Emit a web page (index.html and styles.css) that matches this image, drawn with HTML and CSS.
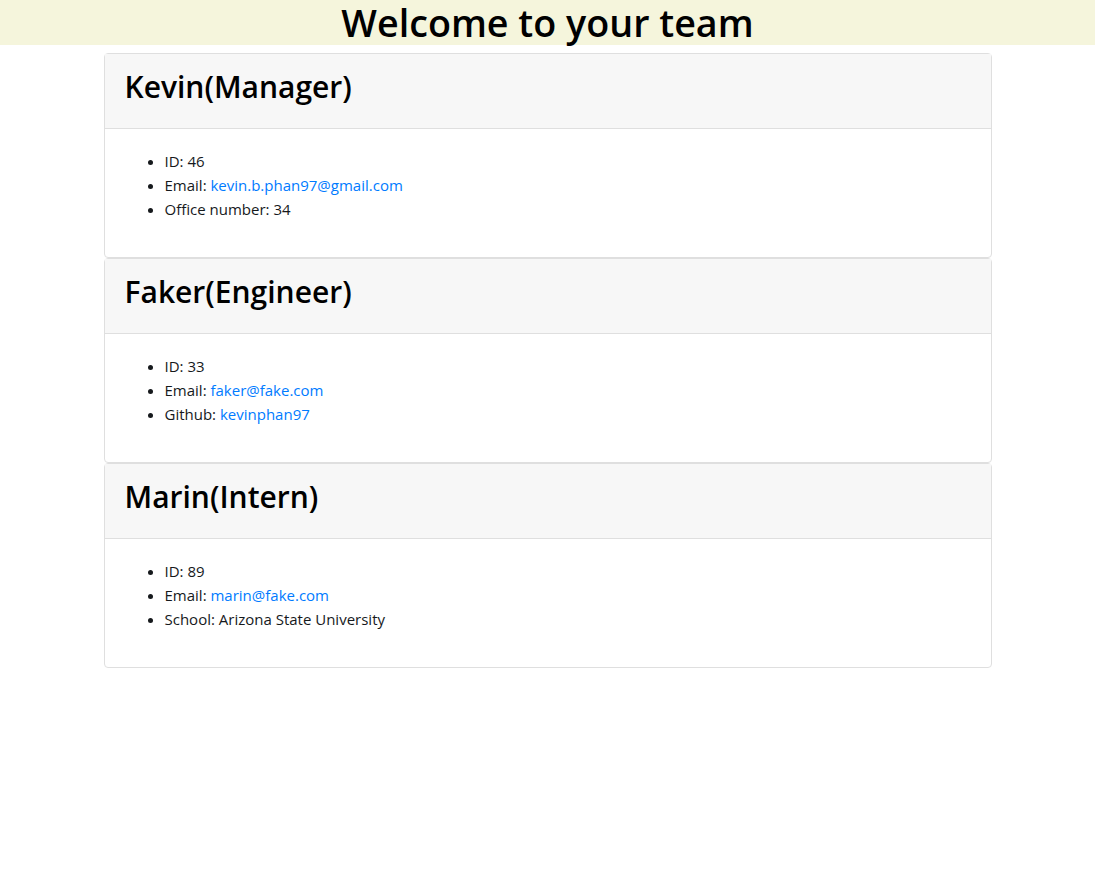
FILE: index.html
```html
<!DOCTYPE html>
<html lang="en">
<head>
<meta charset="utf-8">
<title>Team</title>
<link rel="stylesheet" href="styles.css">
</head>
<body>
<header class="banner">
  <h1 class="banner-title">Welcome to your team</h1>
</header>
<main class="team">
  <section class="card">
    <div class="card-header"><h2 class="card-title">Kevin(Manager)</h2></div>
    <div class="card-body">
      <ul class="info">
        <li>ID: 46</li>
        <li>Email: <a href="#">kevin.b.phan97@gmail.com</a></li>
        <li>Office number: 34</li>
      </ul>
    </div>
  </section>
  <section class="card">
    <div class="card-header"><h2 class="card-title">Faker(Engineer)</h2></div>
    <div class="card-body">
      <ul class="info">
        <li>ID: 33</li>
        <li>Email: <a href="#">faker@fake.com</a></li>
        <li>Github: <a href="#">kevinphan97</a></li>
      </ul>
    </div>
  </section>
  <section class="card">
    <div class="card-header"><h2 class="card-title">Marin(Intern)</h2></div>
    <div class="card-body">
      <ul class="info">
        <li>ID: 89</li>
        <li>Email: <a href="#">marin@fake.com</a></li>
        <li>School: Arizona State University</li>
      </ul>
    </div>
  </section>
</main>
</body>
</html>
```
FILE: styles.css
```css
* { box-sizing: border-box; }
body {
  margin: 0;
  font-family: "Open Sans", "Noto Sans", sans-serif;
  font-size: 15px;
  line-height: 24px;
  color: #16191c;
  background: #fff;
}
.banner {
  background: #f5f5dc;
  height: 45px;
  display: flex;
  justify-content: center;
  align-items: flex-start;
}
.banner-title {
  margin: 0;
  font-size: 37.7px;
  font-weight: 600;
  line-height: 45px;
  color: #000;
}
.team {
  width: 888px;
  margin: 8px auto 0;
}
.card {
  border: 1px solid #dfdfdf;
  border-radius: 4px;
  background: #fff;
}
.card-header {
  background: #f7f7f7;
  border-bottom: 1px solid #dfdfdf;
  padding: 12px 20px;
  height: 75px;
}
.card-title {
  margin: 0;
  font-size: 30px;
  font-weight: 600;
  line-height: 42px;
  color: #000;
}
.card-body {
  padding: 20px;
}
.info {
  margin: 0 0 16px;
  padding-left: 40px;
}
.info a {
  color: #007bff;
  text-decoration: none;
}
```
